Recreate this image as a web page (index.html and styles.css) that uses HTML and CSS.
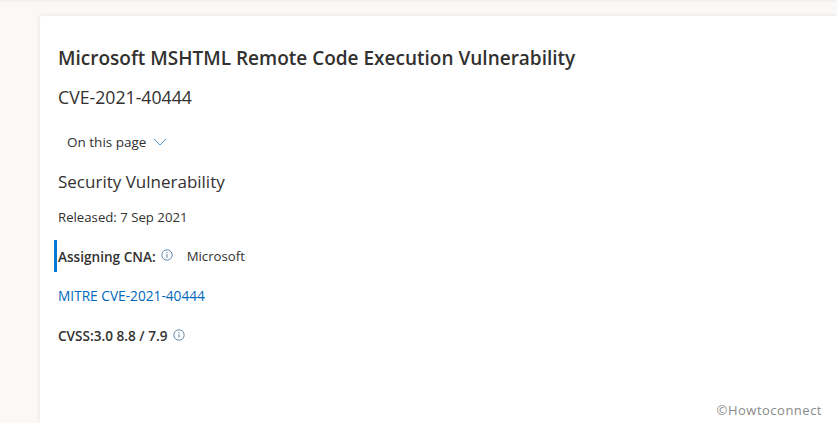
FILE: index.html
```html
<!DOCTYPE html>
<html lang="en">
<head>
    <meta charset="UTF-8">
    <meta name="viewport" content="width=device-width, initial-scale=1.0">
    <title>CVE-2021-40444</title>
    <link rel="stylesheet" href="styles.css">
</head>
<body>
    <div class="top-strip"></div>
    <div class="page">
        <div class="card">
            <h1 class="title">Microsoft MSHTML Remote Code Execution Vulnerability</h1>
            <h2 class="cve">CVE-2021-40444</h2>
            <div class="on-page">
                On this page
                <svg class="chevron" width="14" height="8" viewBox="0 0 14 8"><path d="M1 1l6 6 6-6" fill="none" stroke="#4a9ad8" stroke-width="1"/></svg>
            </div>
            <h3 class="section">Security Vulnerability</h3>
            <p class="released">Released: 7 Sep 2021</p>
            <div class="cna">
                <b>Assigning CNA:</b>
                <svg class="info" width="12" height="12" viewBox="0 0 12 12"><circle cx="6" cy="6" r="5.2" fill="none" stroke="#3f6f96" stroke-width="0.8"/><path d="M6 5.2v3.4M6 3.2v1" stroke="#3f6f96" stroke-width="0.9"/></svg>
                <span class="cna-name">Microsoft</span>
            </div>
            <a class="mitre" href="#">MITRE CVE-2021-40444</a>
            <div class="cvss">
                <b>CVSS:3.0 8.8 / 7.9</b>
                <svg class="info" width="12" height="12" viewBox="0 0 12 12"><circle cx="6" cy="6" r="5.2" fill="none" stroke="#3f6f96" stroke-width="0.8"/><path d="M6 5.2v3.4M6 3.2v1" stroke="#3f6f96" stroke-width="0.9"/></svg>
            </div>
        </div>
    </div>
    <div class="watermark">©Howtoconnect</div>
</body>
</html>
```

FILE: styles.css
```css
* {
    margin: 0;
    padding: 0;
    box-sizing: border-box;
    font-family: "Open Sans", "Noto Sans", sans-serif;
}

html, body {
    height: 100%;
    overflow: hidden;
}

body {
    background-color: #faf9f8;
    color: #323130;
}

.top-strip {
    height: 2px;
    background-color: #f3f2f1;
}

.page {
    padding: 14px 0 0 40px;
    height: 421px;
}

.card {
    height: 100%;
    background-color: #ffffff;
    border-radius: 2px 0 0 0;
    box-shadow: 0 0 4px rgba(0, 0, 0, 0.1);
    padding: 28px 18px 0;
}

.title {
    font-size: 19px;
    line-height: 28px;
    font-weight: 600;
}

.cve {
    font-size: 17.7px;
    line-height: 24px;
    font-weight: 400;
    margin-top: 13px;
}

.on-page {
    display: flex;
    align-items: center;
    gap: 7px;
    font-size: 13.5px;
    line-height: 20px;
    margin: 23px 0 0 9px;
}

.section {
    font-size: 17px;
    line-height: 24px;
    font-weight: 400;
    margin-top: 18px;
}

.released {
    font-size: 13.2px;
    line-height: 18px;
    margin-top: 14px;
}

.cna {
    display: flex;
    align-items: center;
    height: 32px;
    margin: 14px 0 0 -4px;
    padding-left: 1px;
    border-left: 3px solid #0078d4;
    font-size: 13.6px;
}

.cna b,
.cvss b {
    font-weight: 600;
}

.cna .info {
    margin: -3px 0 0 5px;
}

.cna-name {
    margin: -1px 0 0 14px;
    font-size: 13.2px;
}

.mitre {
    display: block;
    font-size: 13.7px;
    line-height: 18px;
    color: #0067b8;
    text-decoration: none;
    margin-top: 15px;
}

.cvss {
    display: flex;
    align-items: center;
    font-size: 13.6px;
    line-height: 18px;
    margin-top: 22px;
}

.cvss .info {
    margin: -3px 0 0 6px;
}

.watermark {
    position: absolute;
    right: 15px;
    top: 402px;
    font-size: 13px;
    line-height: 16px;
    color: #8a8a8a;
    letter-spacing: 0.5px;
}
```
